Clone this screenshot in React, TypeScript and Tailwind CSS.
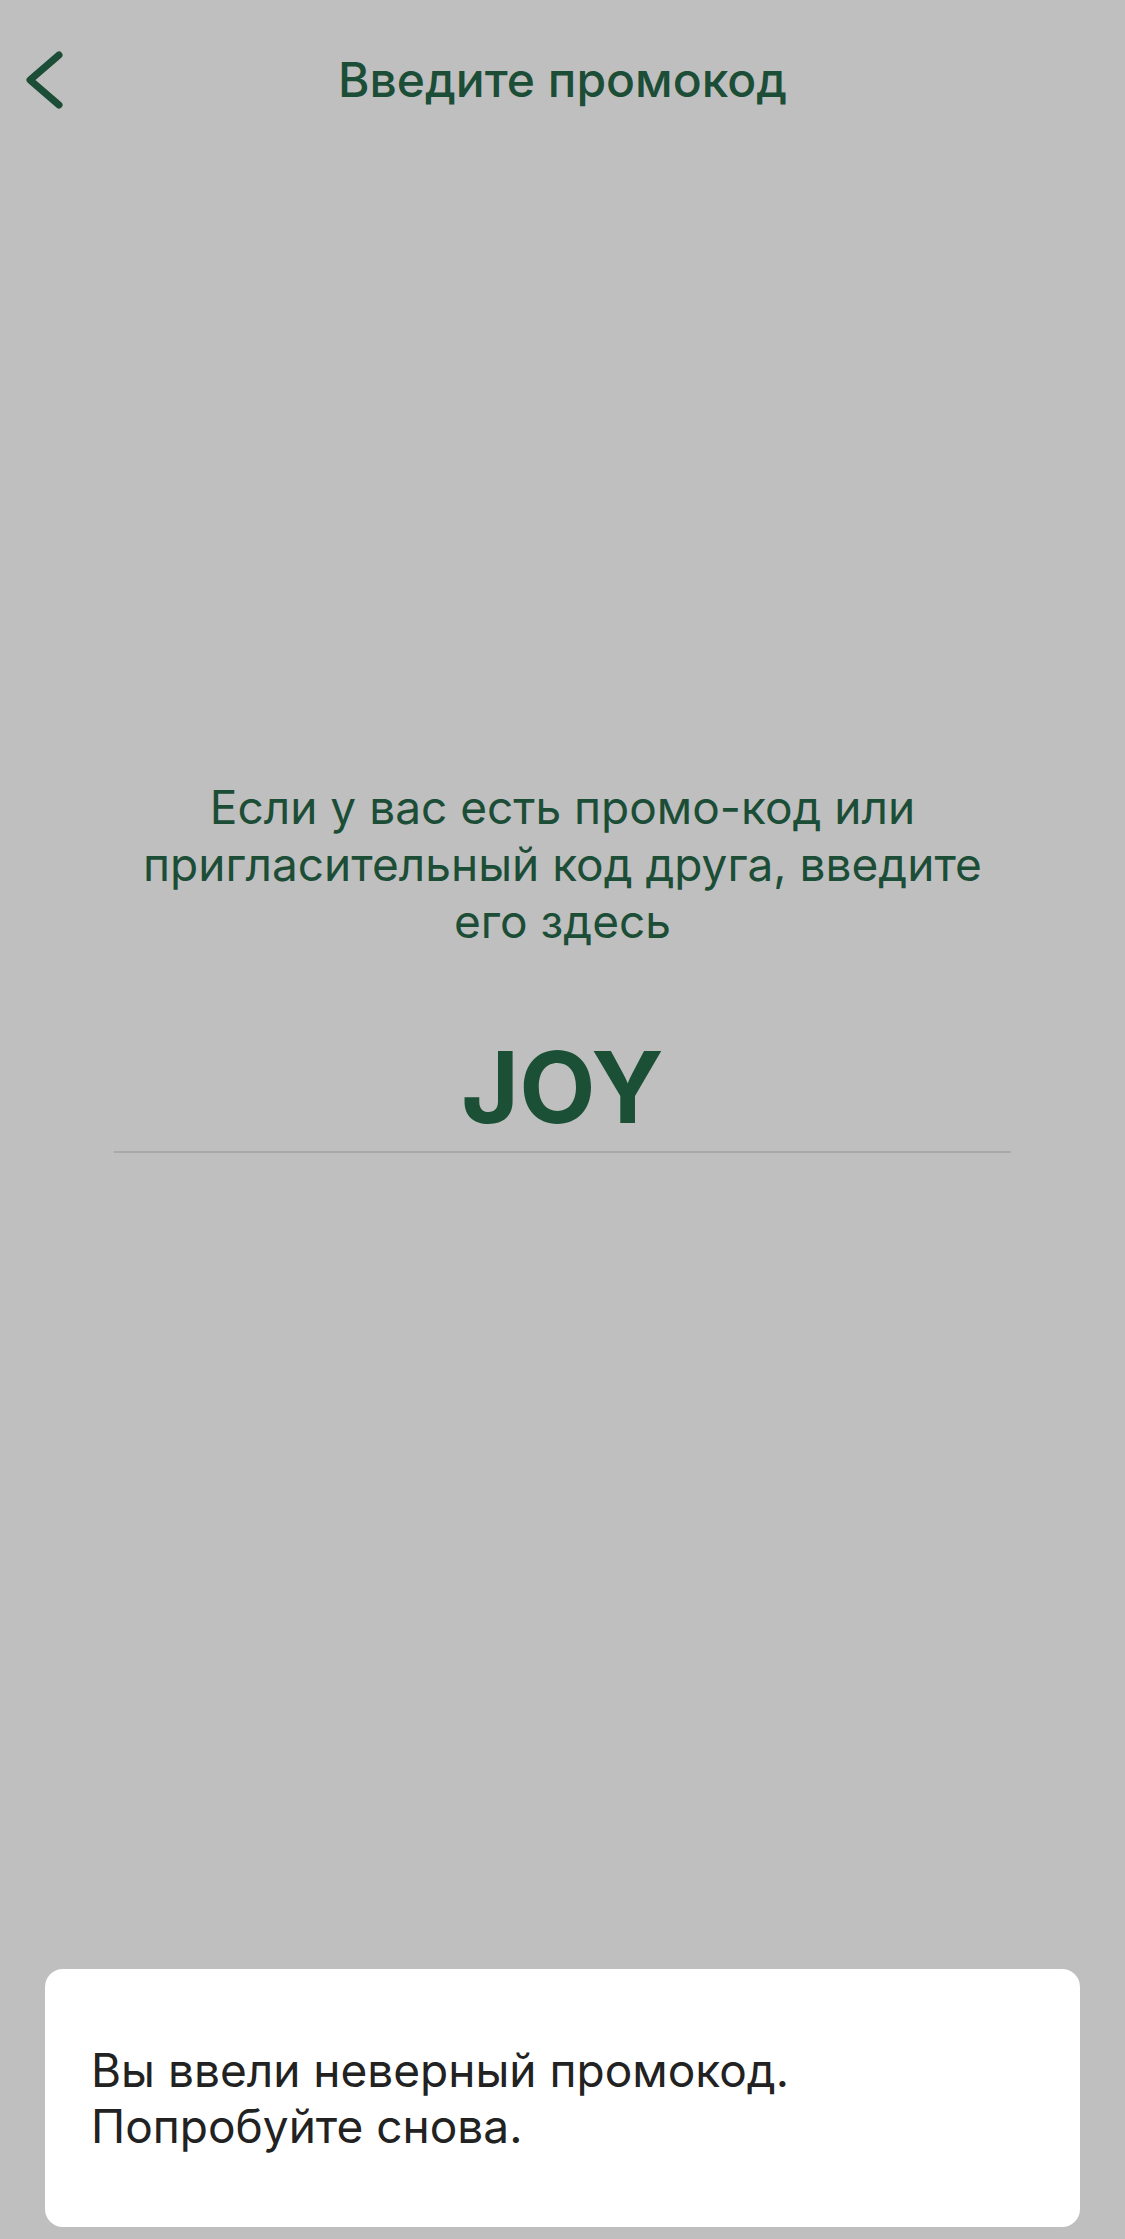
const font = { fontFamily: "Inter, 'Noto Sans', sans-serif" };

export default function App() {
  return (
    <div className="flex min-h-[2239px] w-[1125px] flex-col bg-[#bfbfbf]" style={font}>
      {/* Header */}
      <div className="grid h-[160px] grid-cols-[1fr_auto_1fr] items-center">
        <div className="pl-[14px]">
          <svg width="60" height="80" viewBox="0 0 60 80" fill="none">
            <path d="M45 15 L16 40 L45 65" stroke="#1c4d36" strokeWidth="7" strokeLinecap="round" strokeLinejoin="round" />
          </svg>
        </div>
        <h1 className="text-[48px] font-medium leading-none text-[#1c4d36]">Введите промокод</h1>
        <div />
      </div>

      {/* Promo form */}
      <div className="mt-[619px] flex flex-col items-center">
        <p className="w-[870px] text-center text-[46px] leading-[57px] text-[#1c4d36]">
          Если у вас есть промо-код или пригласительный код друга, введите его здесь
        </p>
        <div className="mt-[88px] text-[99px] font-bold leading-none text-[#1b5037]">JOY</div>
        <div className="mt-[14px] h-[2px] w-[897px] bg-[#a9a9a9]" />
      </div>

      {/* Toast */}
      <div className="mx-[45px] mb-[12px] mt-auto flex h-[258px] items-center rounded-[18px] bg-white px-[46px]">
        <p className="text-[46px] leading-[56px] text-[#222222]">
          Вы ввели неверный промокод.
          <br />
          Попробуйте снова.
        </p>
      </div>
    </div>
  );
}
